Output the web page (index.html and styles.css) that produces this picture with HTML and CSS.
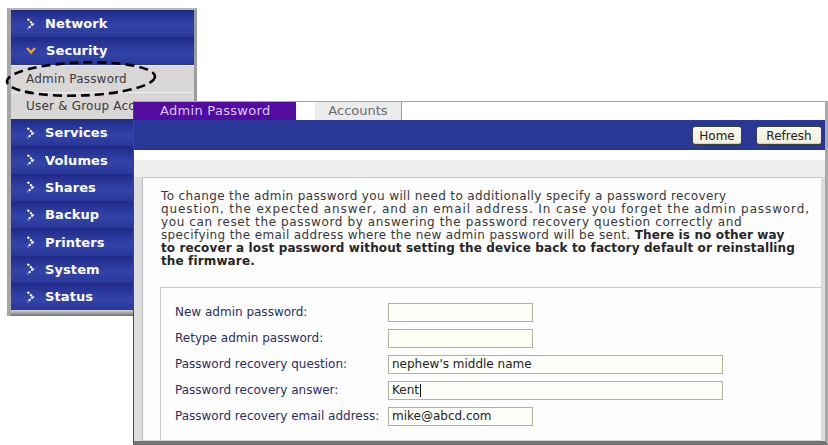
FILE: index.html
```html
<!DOCTYPE html>
<html>
<head>
<meta charset="utf-8">
<title>Admin Password</title>
<link rel="stylesheet" href="styles.css">
</head>
<body>
<div class="desktop">
  <nav class="menu">
    <div class="item"><svg class="chev" width="9" height="12" viewBox="0 0 9 12"><polyline points="1.5,1 7,6 1.5,11" /></svg><span>Network</span></div>
    <div class="item"><svg class="chev-down" width="10" height="7" viewBox="0 0 10 7"><polyline points="1,1 5,5.5 9,1" /></svg><span>Security</span></div>
    <div class="sub">Admin Password</div>
    <div class="sub">User &amp; Group Accounts</div>
    <div class="item"><svg class="chev" width="9" height="12" viewBox="0 0 9 12"><polyline points="1.5,1 7,6 1.5,11" /></svg><span>Services</span></div>
    <div class="item"><svg class="chev" width="9" height="12" viewBox="0 0 9 12"><polyline points="1.5,1 7,6 1.5,11" /></svg><span>Volumes</span></div>
    <div class="item"><svg class="chev" width="9" height="12" viewBox="0 0 9 12"><polyline points="1.5,1 7,6 1.5,11" /></svg><span>Shares</span></div>
    <div class="item"><svg class="chev" width="9" height="12" viewBox="0 0 9 12"><polyline points="1.5,1 7,6 1.5,11" /></svg><span>Backup</span></div>
    <div class="item"><svg class="chev" width="9" height="12" viewBox="0 0 9 12"><polyline points="1.5,1 7,6 1.5,11" /></svg><span>Printers</span></div>
    <div class="item"><svg class="chev" width="9" height="12" viewBox="0 0 9 12"><polyline points="1.5,1 7,6 1.5,11" /></svg><span>System</span></div>
    <div class="item"><svg class="chev" width="9" height="12" viewBox="0 0 9 12"><polyline points="1.5,1 7,6 1.5,11" /></svg><span>Status</span></div>
    <div class="menu-foot"></div>
  </nav>

  <svg class="callout" width="170" height="50" viewBox="0 0 170 50">
    <ellipse cx="81" cy="24" rx="74" ry="16.5" transform="rotate(-2 81 24)" />
  </svg>

  <section class="win">
    <div class="tabs">
      <div class="tab tab-active">Admin Password</div>
      <div class="tab tab-idle">Accounts</div>
    </div>
    <div class="toolbar">
      <button class="btn btn-home">Home</button>
      <button class="btn btn-refresh">Refresh</button>
    </div>
    <div class="content">
      <div class="strip"></div>
      <div class="body">
        <div class="panel">
          <p class="intro">
            <span class="ln ln1">To change the admin password you will need to additionally specify a password recovery</span>
            <span class="ln ln2">question, the expected answer, and an email address. In case you forget the admin password,</span>
            <span class="ln ln3">you can reset the password by answering the password recovery question correctly and</span>
            <span class="ln ln4">specifying the email address where the new admin password will be sent. <b>There is no other way</b></span>
            <b class="ln">to recover a lost password without setting the device back to factory default or reinstalling</b>
            <b class="ln">the firmware.</b>
          </p>
          <div class="form">
            <label class="lbl">New admin password:</label>
            <input class="field short" type="password" value="">
            <label class="lbl">Retype admin password:</label>
            <input class="field short" type="password" value="">
            <label class="lbl">Password recovery question:</label>
            <input class="field wide" type="text" value="nephew's middle name">
            <label class="lbl">Password recovery answer:</label>
            <span class="field-wrap"><input class="field wide" type="text" value="Kent"><span class="caret"></span></span>
            <label class="lbl">Password recovery email address:</label>
            <input class="field short" type="text" value="mike@abcd.com">
          </div>
        </div>
      </div>
    </div>
  </section>
</div>
</body>
</html>
```

FILE: styles.css
```css
* { box-sizing: border-box; margin: 0; padding: 0; }
html, body { width: 828px; height: 445px; overflow: hidden; background: #ffffff; }
body { font-family: "DejaVu Sans", Verdana, sans-serif; }

.desktop { position: relative; width: 828px; height: 445px; }

/* ---------- left navigation window ---------- */
.menu {
  position: absolute;
  left: 7px;
  top: 8px;
  width: 190px;
  display: flex;
  flex-direction: column;
  border-left: 4px solid #a6a6a6;
  border-top: 2px solid #b8b8b8;
  border-right: 3px solid #9c9c9c;
  background: #2a3898;
}
.item {
  height: 27.3px;
  display: flex;
  align-items: center;
  padding-left: 15px;
  gap: 10px;
  color: #ffffff;
  font-weight: bold;
  font-size: 13px;
  letter-spacing: 0.1px;
  white-space: nowrap;
  background: linear-gradient(#1f2a86 0%, #2c3a9e 35%, #3343a8 60%, #2a3799 100%);
}
.chev polyline {
  fill: none;
  stroke: #ffffff;
  stroke-width: 2;
  stroke-dasharray: 2.4 1.2;
}
.chev-down polyline {
  fill: none;
  stroke: #f2a22c;
  stroke-width: 2.2;
}
.sub {
  height: 27.3px;
  display: flex;
  align-items: center;
  padding-left: 15px;
  font-size: 12px;
  letter-spacing: 0.2px;
  color: #3a3a3a;
  background: #d9d6d6;
  border-top: 1px solid #efefef;
  white-space: nowrap;
  overflow: hidden;
}
.menu-foot {
  height: 6px;
  background: linear-gradient(#d4d4d4, #9a9a9a 60%, #6c6c6c);
}

.callout {
  position: absolute;
  left: 0;
  top: 55px;
  z-index: 2;
}
.callout ellipse {
  fill: none;
  stroke: #000000;
  stroke-width: 2.6;
  stroke-dasharray: 9 5;
}

/* ---------- main window ---------- */
.win {
  position: absolute;
  left: 133px;
  top: 101px;
  width: 695px;
  height: 344px;
  z-index: 3;
  display: flex;
  flex-direction: column;
  background: #ffffff;
  border-left: 1px solid #4a4a4a;
  border-top: 1px solid #a4a4a4;
  border-right: 3px solid #a8a8a8;
  border-bottom: 4px solid #727272;
}
.tabs {
  height: 18px;
  display: flex;
  background: #ffffff;
}
.tab {
  font-size: 13px;
  line-height: 18px;
  white-space: nowrap;
}
.tab-active {
  width: 162px;
  padding-left: 26px;
  letter-spacing: 0.3px;
  background: #520c9f;
  color: #dcc8ff;
}
.tab-idle {
  margin-left: 19px;
  width: 87px;
  text-align: center;
  background: #ebebeb;
  color: #6a6a6a;
  border-right: 1px solid #9c9c9c;
}
.toolbar {
  height: 30px;
  display: flex;
  justify-content: flex-end;
  align-items: flex-start;
  gap: 14px;
  padding: 6px 3px 0 0;
  background: #293796;
}
.btn {
  height: 19px;
  font-family: "DejaVu Sans", Verdana, sans-serif;
  font-size: 12px;
  color: #222222;
  background: linear-gradient(#fbf9ee, #f1eedb);
  border: 1px solid #38413a;
  border-radius: 3px;
  box-shadow: inset 0 -1px 0 #d8d4bc;
}
.btn-home { width: 50px; }
.btn-refresh { width: 66px; }

.content {
  flex: 1;
  display: flex;
  flex-direction: column;
}
.strip {
  height: 27px;
  background: linear-gradient(#ffffff 0, #ffffff 10px, #efefef 10px, #efefef 100%);
}
.body {
  flex: 1;
  display: flex;
  padding: 0 4px 0 8px;
  background: #dedede;
}
.panel {
  flex: 1;
  display: flex;
  flex-direction: column;
  padding: 12px 0 0 18px;
  background: #fdfdfd;
  border-top: 1px solid #c6c6c6;
  border-left: 1px solid #bdbdbd;
  border-bottom: 1px solid #d2d2d2;
}
.intro {
  display: flex;
  flex-direction: column;
  font-size: 12px;
  line-height: 13px;
  color: #383838;
  white-space: nowrap;
}
.ln { display: block; height: 13px; }
.ln1 { letter-spacing: 0.37px; }
.ln2 { letter-spacing: 0.89px; }
.ln3 { letter-spacing: 0.62px; }
.ln4 { letter-spacing: 0.37px; }
.intro b { color: #262626; letter-spacing: 0.13px; }

.form {
  flex: 1;
  margin: 19px 0 0 -1px;
  padding: 11px 0 0 14px;
  border-top: 1px solid #cbcbcb;
  border-left: 1px solid #cbcbcb;
  display: grid;
  grid-template-columns: 213px auto;
  grid-auto-rows: 26px;
  align-items: center;
  align-content: start;
}
.lbl {
  font-size: 12px;
  color: #2d2d62;
  white-space: nowrap;
}
.field {
  justify-self: start;
  height: 19px;
  padding: 0 3px;
  font-family: "DejaVu Sans", Verdana, sans-serif;
  font-size: 12px;
  color: #222222;
  background: #fffffa;
  border: 1px solid #b2b698;
  outline: none;
}
.field-wrap {
  position: relative;
  justify-self: start;
  display: flex;
}
.caret {
  position: absolute;
  left: 32px;
  top: 3px;
  width: 1px;
  height: 13px;
  background: #111111;
}
.short { width: 145px; }
.wide { width: 335px; }
```
